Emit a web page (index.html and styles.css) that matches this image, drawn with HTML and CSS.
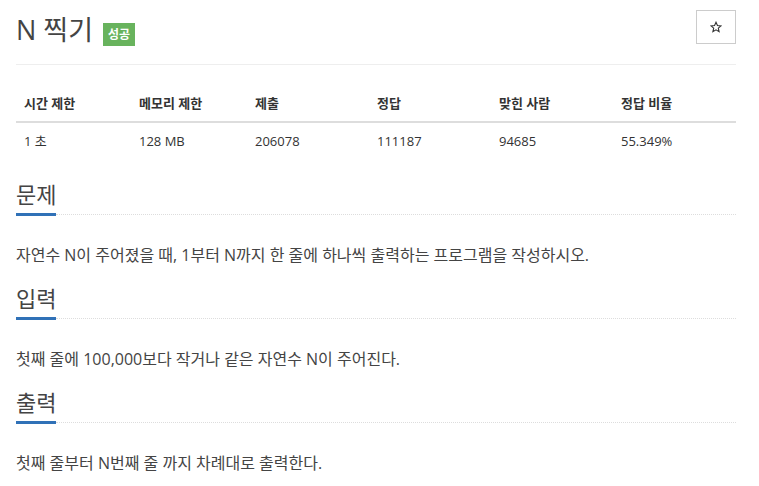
FILE: index.html
```html
<!DOCTYPE html>
<html lang="ko">
<head>
<meta charset="utf-8">
<title>N 찍기</title>
<link rel="stylesheet" href="styles.css">
</head>
<body>
<div class="container">
  <div class="page-header">
    <h1 class="title"><span class="title-text">N 찍기</span><span class="badge">성공</span></h1>
    <button class="star-btn" type="button" aria-label="즐겨찾기">
      <svg width="12" height="12" viewBox="0 0 24 24"><path d="M12 2.5l2.9 6.6 7.1.6-5.4 4.7 1.6 7-6.2-3.7-6.2 3.7 1.6-7L2 9.7l7.1-.6z" fill="none" stroke="#333" stroke-width="2.2" stroke-linejoin="miter"/></svg>
    </button>
  </div>

  <table class="info">
    <colgroup>
      <col class="c1"><col class="c2"><col class="c3"><col class="c4"><col class="c5"><col class="c6">
    </colgroup>
    <thead>
      <tr><th>시간 제한</th><th>메모리 제한</th><th>제출</th><th>정답</th><th>맞힌 사람</th><th>정답 비율</th></tr>
    </thead>
    <tbody>
      <tr><td>1 초</td><td>128 MB</td><td>206078</td><td>111187</td><td>94685</td><td>55.349%</td></tr>
    </tbody>
  </table>

  <section class="section">
    <h2 class="headline"><span class="headline-text">문제</span><span class="headline-rule"></span></h2>
    <p class="desc">자연수 N이 주어졌을 때, 1부터 N까지 한 줄에 하나씩 출력하는 프로그램을 작성하시오.</p>
  </section>
  <section class="section">
    <h2 class="headline"><span class="headline-text">입력</span><span class="headline-rule"></span></h2>
    <p class="desc">첫째 줄에 100,000보다 작거나 같은 자연수 N이 주어진다.</p>
  </section>
  <section class="section">
    <h2 class="headline"><span class="headline-text">출력</span><span class="headline-rule"></span></h2>
    <p class="desc">첫째 줄부터 N번째 줄 까지 차례대로 출력한다.</p>
  </section>
</div>
</body>
</html>
```

FILE: styles.css
```css
* { box-sizing: border-box; }
html, body { margin: 0; padding: 0; background: #fff; }
body {
  font-family: "Open Sans", "Noto Sans CJK KR", sans-serif;
  color: #333;
  font-size: 13px;
}
.container {
  width: 759px;
  padding: 0 23px 0 16px;
}
.page-header {
  display: flex;
  justify-content: space-between;
  align-items: flex-start;
  padding-top: 10px;
  padding-bottom: 14px;
  border-bottom: 1px solid #eee;
}
.title {
  margin: 0;
  display: flex;
  align-items: center;
  height: 40px;
  font-size: 27px;
  font-weight: 400;
  color: #444;
  line-height: 40px;
}
.badge {
  display: inline-block;
  margin-left: 10px;
  margin-top: 9px;
  height: 23px;
  line-height: 23px;
  padding: 0 5px;
  background: #68b35d;
  color: #fff;
  font-size: 12px;
  font-weight: 700;
}
.star-btn {
  width: 40px;
  height: 34px;
  margin: 0;
  padding: 0;
  border: 1px solid #ccc;
  background: #fff;
  display: flex;
  align-items: center;
  justify-content: center;
}
.info {
  width: 720px;
  margin-top: 20px;
  margin-bottom: 20px;
  border-collapse: collapse;
  table-layout: fixed;
}
.c1 { width: 115px; }
.c2 { width: 116px; }
.c3 { width: 122px; }
.c4 { width: 122px; }
.c5 { width: 122px; }
.c6 { width: 123px; }
.info th, .info td {
  text-align: left;
  padding: 8px;
  line-height: 20px;
  font-size: 13px;
}
.info th {
  font-weight: 700;
  border-bottom: 2px solid #ddd;
}
.section { margin-bottom: 16px; }
.headline {
  display: flex;
  align-items: flex-end;
  margin: 0;
  font-size: 22px;
  font-weight: 400;
  line-height: 30px;
  color: #444;
}
.headline-text {
  display: block;
  padding-bottom: 4px;
  border-bottom: 3px solid #3071b7;
}
.headline-rule {
  flex: 1;
  margin-bottom: 1px;
  border-bottom: 1px dotted #ddd;
}
.desc {
  margin: 27px 0 0;
  font-size: 16px;
  line-height: 24px;
  color: #444;
}
```
